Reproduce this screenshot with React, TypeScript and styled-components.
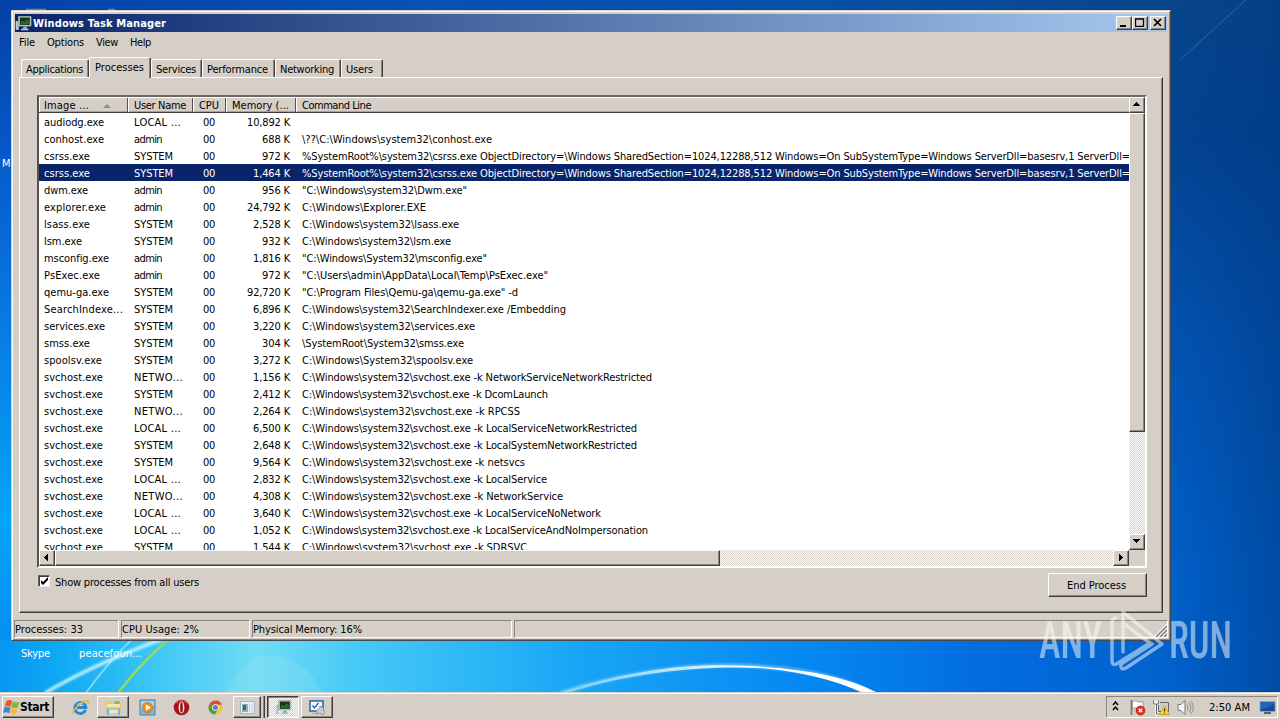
import { useLayoutEffect, useRef, useState } from "react";
import type { ReactNode } from "react";
import styled, { createGlobalStyle, css } from "styled-components";

type Process = {
    name: [string, number];
    user: [string, number];
    memory: string;
    command?: [string, number];
    selected?: boolean;
};

const CSRSS = '%SystemRoot%\\system32\\csrss.exe ObjectDirectory=\\Windows SharedSection=1024,12288,512 Windows=On SubSystemType=Windows ServerDll=basesrv,1 ServerDll=';
const SVCHOST = 'C:\\Windows\\system32\\svchost.exe -k ';

const SYSTEM: [string, number] = ['SYSTEM', 39];
const ADMIN: [string, number] = ['admin', 28];
const LOCAL: [string, number] = ['LOCAL ...', 47];
const NETWORK: [string, number] = ['NETWO...', 49];
const SVC: [string, number] = ['svchost.exe', 59];

const processes: Process[] = [
    { name: ['audiodg.exe', 60], user: LOCAL, memory: '10,892 K' },
    { name: ['conhost.exe', 60], user: ADMIN, memory: '688 K', command: ['\\??\\C:\\Windows\\system32\\conhost.exe', 190] },
    { name: ['csrss.exe', 46], user: SYSTEM, memory: '972 K', command: [CSRSS, 828] },
    { name: ['csrss.exe', 46], user: SYSTEM, memory: '1,464 K', command: [CSRSS, 828], selected: true },
    { name: ['dwm.exe', 44], user: ADMIN, memory: '956 K', command: ['"C:\\Windows\\system32\\Dwm.exe"', 165] },
    { name: ['explorer.exe', 62], user: ADMIN, memory: '24,792 K', command: ['C:\\Windows\\Explorer.EXE', 124] },
    { name: ['lsass.exe', 46], user: SYSTEM, memory: '2,528 K', command: ['C:\\Windows\\system32\\lsass.exe', 157] },
    { name: ['lsm.exe', 38], user: SYSTEM, memory: '932 K', command: ['C:\\Windows\\system32\\lsm.exe', 149] },
    { name: ['msconfig.exe', 65], user: ADMIN, memory: '1,816 K', command: ['"C:\\Windows\\System32\\msconfig.exe"', 185] },
    { name: ['PsExec.exe', 56], user: ADMIN, memory: '972 K', command: ['"C:\\Users\\admin\\AppData\\Local\\Temp\\PsExec.exe"', 246] },
    { name: ['qemu-ga.exe', 65], user: SYSTEM, memory: '92,720 K', command: ['"C:\\Program Files\\Qemu-ga\\qemu-ga.exe" -d', 216] },
    { name: ['SearchIndexe...', 79], user: SYSTEM, memory: '6,896 K', command: ['C:\\Windows\\system32\\SearchIndexer.exe /Embedding', 264] },
    { name: ['services.exe', 61], user: SYSTEM, memory: '3,220 K', command: ['C:\\Windows\\system32\\services.exe', 173] },
    { name: ['smss.exe', 46], user: SYSTEM, memory: '304 K', command: ['\\SystemRoot\\System32\\smss.exe', 162] },
    { name: ['spoolsv.exe', 58], user: SYSTEM, memory: '3,272 K', command: ['C:\\Windows\\System32\\spoolsv.exe', 171] },
    { name: SVC, user: NETWORK, memory: '1,156 K', command: [SVCHOST + 'NetworkServiceNetworkRestricted', 350] },
    { name: SVC, user: SYSTEM, memory: '2,412 K', command: [SVCHOST + 'DcomLaunch', 246] },
    { name: SVC, user: NETWORK, memory: '2,264 K', command: [SVCHOST + 'RPCSS', 218] },
    { name: SVC, user: LOCAL, memory: '6,500 K', command: [SVCHOST + 'LocalServiceNetworkRestricted', 335] },
    { name: SVC, user: SYSTEM, memory: '2,648 K', command: [SVCHOST + 'LocalSystemNetworkRestricted', 335] },
    { name: SVC, user: SYSTEM, memory: '9,564 K', command: [SVCHOST + 'netsvcs', 223] },
    { name: SVC, user: LOCAL, memory: '2,832 K', command: [SVCHOST + 'LocalService', 245] },
    { name: SVC, user: NETWORK, memory: '4,308 K', command: [SVCHOST + 'NetworkService', 261] },
    { name: SVC, user: LOCAL, memory: '3,640 K', command: [SVCHOST + 'LocalServiceNoNetwork', 299] },
    { name: SVC, user: LOCAL, memory: '1,052 K', command: [SVCHOST + 'LocalServiceAndNoImpersonation', 346] },
    { name: SVC, user: SYSTEM, memory: '1,544 K', command: [SVCHOST + 'SDRSVC', 225] },
];

const memoryWidth = (text: string) => (text.length === 8 ? 43 : text.length === 7 ? 37 : 28);

// Spreads the letters so that the text takes up the given width
const Fit = ({ text, width }: { text: string; width: number }) => {
    const ref = useRef<HTMLSpanElement>(null);
    const [spacing, setSpacing] = useState(0);

    useLayoutEffect(() => {
        const natural = ref.current!.getBoundingClientRect().width - spacing * text.length;
        setSpacing((width - natural) / text.length);
    }, [text, width]);

    return <FitText ref={ ref } style={ { letterSpacing: spacing } }>{ text }</FitText>;
};

const WindowsFlag = () => (
    <svg width="17" height="17" viewBox="0 0 17 17">
        <path d="M3.400 2Q7 .2 9.300 2L7.700 7.800Q5 6.200 1.700 7.800Z" fill="#e8582a" />
        <path d="M9.900 2.500Q13 4.200 16.500 2.700L14.800 8.500Q11.500 9.800 8.300 8.200Z" fill="#7fb83a" />
        <path d="M1.400 8.600Q4.800 7 7.400 8.700L6 14.200Q3 12.600 0 14Z" fill="#3d86d6" />
        <path d="M8 9.100Q11.200 10.800 14.600 9.300L13 14.900Q9.800 16.400 6.500 14.600Z" fill="#f5bd30" />
    </svg>
);

const TaskManagerIcon = ({ size = 17 }: { size?: number }) => (
    <svg width={ size } height={ size } viewBox="0 0 17 17">
        <path d="M1 6v9h2.500V6z" fill="#9aa0a0" />
        <path d="M1.200 6v8M3 7v8" stroke="#e8ecec" strokeWidth=".8" />
        <path d="M3.500 1.500h12.500v9.500H3.500z" fill="#c8d0c8" stroke="#a4aca4" strokeWidth=".8" />
        <path d="M4.800 2.500h10v7.500h-10z" fill="#12351b" />
        <path d="M5.500 7.500l2-2 2 1.500 2-3 3 3v2.500h-9z" fill="#28642e" />
        <path d="M8.500 11.500h3l1 3h-5z" fill="#9ba6b0" />
        <path d="M6 14.500h7.500" stroke="#b8c3ca" strokeWidth="1.500" />
    </svg>
);

const IeIcon = () => (
    <svg width="17" height="17" viewBox="0 0 17 17">
        <path d="M13.500 11A5.500 5.500 0 1 1 13.800 8.500H5" fill="none" stroke="#2b85cf" strokeWidth="2.900" />
        <path d="M1.600 15.200C-.5 11.500 10 1.500 15.500 1.800c1 .3.8 1.700.2 3" fill="none" stroke="#e9b829" strokeWidth="1.500" />
        <path d="M5 5.500Q8 3 11.500 5" fill="none" stroke="#8ed0f5" />
    </svg>
);

const FolderIcon = () => (
    <svg width="17" height="17" viewBox="0 0 17 17">
        <path d="M1 2.500h6l1 1.500h8v11H1z" fill="#e9ca67" />
        <path d="M2 5h13v9H2z" fill="#f8e8a5" />
        <path d="M9.500 2h5v3h-5z" fill="#88b775" />
        <path d="M3 16V9.500h11V16" fill="none" stroke="#6fb9e6" strokeWidth="2.200" />
        <path d="M3 9h11" stroke="#b4e0f5" />
    </svg>
);

const PlayerIcon = () => (
    <svg width="17" height="17" viewBox="0 0 17 17">
        <path d="M1 1h15v15H1z" fill="#78b9e5" stroke="#4681ad" />
        <path d="M2 2h13v5Q8 6 2 11z" fill="#afdaef" />
        <circle cx="8.500" cy="8.500" r="5.300" fill="#f28b1c" stroke="#d06a13" strokeWidth=".7" />
        <path d="M6.800 5.300v6.400l5-3.200z" fill="#fff" />
    </svg>
);

const OperaIcon = () => (
    <svg width="17" height="17" viewBox="0 0 17 17">
        <circle cx="8.500" cy="8.500" r="7.800" fill="#a9141b" />
        <path d="M3 4Q8-.5 14 4" fill="none" stroke="#da6260" />
        <ellipse cx="8.500" cy="8.500" rx="2.900" ry="6" fill="#f2dfdc" />
        <ellipse cx="8.500" cy="8.500" rx="1.300" ry="5.200" fill="#8d1015" />
    </svg>
);

const ChromeIcon = () => (
    <svg width="15" height="15" viewBox="0 0 16 16">
        <circle cx="8" cy="8" r="7.500" fill="#f6c632" />
        <path d="M8 8L1.500 4.200A7.500 7.500 0 0 0 7.500 15.500L11 9z" fill="#4d9c53" />
        <path d="M8 8L1.500 4.200A7.500 7.500 0 0 1 14.900 5H8z" fill="#d94c3d" />
        <circle cx="8" cy="8" r="3.500" fill="#fff" />
        <circle cx="8" cy="8" r="2.700" fill="#4783d6" />
    </svg>
);

const ConsoleIcon = () => (
    <svg width="15" height="13" viewBox="0 0 15 13">
        <path d="M.5.5h14v12H.5z" fill="#e9f0f2" stroke="#a5b5bc" />
        <path d="M2 3h6v8H2z" fill="#8fb0b8" />
        <path d="M3 4h3v5H3z" fill="#3c6472" />
        <path d="M9.500 3v8M12 3v8" stroke="#c6d2d8" />
    </svg>
);

const ConfigIcon = () => (
    <svg width="18" height="17" viewBox="0 0 18 17">
        <path d="M2 2h13v10H2z" fill="#f4f8ff" stroke="#2f5f9e" strokeWidth="1.500" />
        <path d="M4.500 6.500L6.500 9l4-5" fill="none" stroke="#315fb5" strokeWidth="1.400" />
        <path d="M10.500 7.500h3M4 14.500h6" stroke="#8caed8" />
        <path d="M13 7l3 3-1 1 2 2-2 3-3-2-3 1-1-3 3-2z" fill="#c4ced6" stroke="#7d8892" strokeWidth=".8" />
    </svg>
);

const FlagIcon = () => (
    <svg width="17" height="17" viewBox="0 0 17 17">
        <path d="M2.500 1v15" stroke="#777" strokeWidth="1.700" />
        <path d="M3.500 2.500Q6 1 8.500 2.500T14 2.500v7Q11.500 11 8.500 9.500t-5 0z" fill="#fff" stroke="#8b8b8b" strokeWidth=".8" />
        <circle cx="11.500" cy="11.500" r="4.500" fill="#d82b25" stroke="#a61715" strokeWidth=".6" />
        <path d="M9.700 9.700l3.600 3.600m0-3.600l-3.600 3.600" stroke="#fff" strokeWidth="1.400" />
    </svg>
);

const NetworkIcon = () => (
    <svg width="17" height="17" viewBox="0 0 17 17">
        <path d="M5.500 3.500h10v9h-10z" fill="#c9cfd0" stroke="#666" />
        <path d="M1.500 1v3.500h4V1M3.500 4.500V15H8" fill="none" stroke="#fff" strokeWidth="2.500" />
        <path d="M.7 1v4h5V1M3.500 5v10H9" fill="none" stroke="#555" strokeWidth=".9" />
        <path d="M11.500 6.500L16.500 15.500H6.500z" fill="#ffd82d" stroke="#c39618" strokeWidth=".7" />
        <path d="M11.500 9.500v3m0 1.200v1" stroke="#333" strokeWidth="1.300" />
    </svg>
);

const SpeakerIcon = () => (
    <svg width="17" height="17" viewBox="0 0 17 17">
        <path d="M1 5.500h3l4-4v14l-4-4H1z" fill="#f6f6f6" stroke="#777" />
        <path d="M10 5.500q2 3 0 6M12 3.500q3.500 5 0 10M14 2q4.500 6.500 0 13" fill="none" stroke="#8c8c8c" />
    </svg>
);

const MonitorIcon = () => (
    <svg width="17" height="15" viewBox="0 0 17 15">
        <path d="M1 1.500h15v10H1z" fill="#2265b0" stroke="#8ba6c0" strokeWidth=".8" />
        <path d="M1.500 9Q9 9 15.500 3v8h-14z" fill="#194c96" />
        <path d="M5 13h7" stroke="#303c51" strokeWidth="1.500" />
    </svg>
);

const Arrow = ({ dir }: { dir: 'up' | 'down' | 'left' | 'right' }) => {
    const paths = {
        up: 'M4 2h1v1h1v1h1v1h1v1H1V5h1V4h1V3h1z',
        down: 'M1 2h7v1H7v1H6v1H5v1H4V5H3V4H2V3H1z',
        left: 'M6 1v7H5V7H4V6H3V5H2V4h1V3h1V2h1V1z',
        right: 'M3 1h1v1h1v1h1v1h1v1H6v1H5v1H4v1H3z',
    };
    return <ArrowSvg width="9" height="9" viewBox="0 0 9 9"><path d={ paths[dir] } /></ArrowSvg>;
};

const Wallpaper = () => (
    <WallpaperSvg viewBox="0 0 1280 692" preserveAspectRatio="none">
        <defs>
            <linearGradient id="left" x1="0" y1="0" x2="0" y2="1">
                <stop offset="0" stopColor="#0440a5" />
                <stop offset=".22" stopColor="#0759c8" />
                <stop offset=".5" stopColor="#087fe4" />
                <stop offset=".75" stopColor="#05a4f5" />
                <stop offset="1" stopColor="#0587ee" />
            </linearGradient>
            <linearGradient id="right" x1="0" y1="0" x2="0" y2="1">
                <stop offset="0" stopColor="#08458a" />
                <stop offset=".2" stopColor="#024391" />
                <stop offset=".5" stopColor="#0254b4" />
                <stop offset=".8" stopColor="#0060ca" />
                <stop offset="1" stopColor="#0064d0" />
            </linearGradient>
            <linearGradient id="shade" x1="0" y1="0" x2="1" y2="0">
                <stop offset="0" stopColor="#003a82" stopOpacity="0" />
                <stop offset="1" stopColor="#003a82" stopOpacity=".55" />
            </linearGradient>
            <linearGradient id="top" x1="0" y1="0" x2="1" y2="0">
                <stop offset="0" stopColor="#0442a8" />
                <stop offset=".35" stopColor="#0650b8" />
                <stop offset=".7" stopColor="#0650a8" />
                <stop offset="1" stopColor="#08458a" />
            </linearGradient>
            <linearGradient id="bottom" x1="0" y1="0" x2="1" y2="0">
                <stop offset="0" stopColor="#0596f2" />
                <stop offset=".05" stopColor="#10aaf5" />
                <stop offset=".13" stopColor="#42caf4" />
                <stop offset=".2" stopColor="#72dcf4" />
                <stop offset=".28" stopColor="#45c9f7" />
                <stop offset=".45" stopColor="#19a6f5" />
                <stop offset=".63" stopColor="#0588f2" />
                <stop offset=".77" stopColor="#026cdf" />
                <stop offset=".91" stopColor="#0062cd" />
                <stop offset="1" stopColor="#0062cd" />
            </linearGradient>
            <linearGradient id="arc" x1="0" y1="0" x2="1" y2="0">
                <stop offset="0" stopColor="#9de1ff" stopOpacity=".5" />
                <stop offset=".6" stopColor="#fff" />
                <stop offset="1" stopColor="#fff" />
            </linearGradient>
            <filter id="soft"><feGaussianBlur stdDeviation="1.200" /></filter>
        </defs>
        <rect width="640" height="692" fill="url(#left)" />
        <rect x="640" width="640" height="692" fill="url(#right)" />
        <rect width="1165" height="14" fill="url(#top)" />
        <rect y="640" width="1280" height="52" fill="url(#bottom)" />
        <rect x="1165" width="115" height="692" fill="url(#shade)" />
        <path d="M1180 60L1250-4" stroke="#6ea5d0" strokeWidth="1.500" opacity=".22" />
        <path d="M26 9.500h20M108 9.500h7" stroke="#b9a06f" strokeWidth="1.500" opacity=".7" />
        <path d="M226 692Q245 655 272 655Q308 660 322 692z" fill="#b5eef5" opacity=".16" />
        <path d="M45 693Q92 665 165 638" stroke="#d9fbff" strokeWidth="3.500" fill="none" opacity=".8" filter="url(#soft)" />
        <path d="M86 693Q98 676 112 660T135 638" stroke="#b5f0ff" strokeWidth="2" fill="none" opacity=".6" />
        <path d="M118 693Q138 666 170 638" stroke="#92dc58" strokeWidth="2.500" fill="none" />
        <path d="M560 693C640 667 720 662 766 667C815 671 850 680 870 693" stroke="#fff" strokeWidth="4" fill="none" opacity=".35" filter="url(#soft)" />
        <path d="M562 692C640 667 700 663 750 666Q835 670 878 693L863 693Q822 674 766 668.500C720 665 640 669 567 693z" fill="url(#arc)" />
    </WallpaperSvg>
);

const Watermark = () => (
    <WatermarkSvg viewBox="0 0 200 70">
        <g fill="#fff" fontFamily="Roboto, sans-serif" fontSize="51" fontWeight="500">
            <text x="3" y="53" textLength="63" lengthAdjust="spacingAndGlyphs">ANY</text>
            <text x="133" y="53" textLength="63" lengthAdjust="spacingAndGlyphs">RUN</text>
        </g>
        <g fill="none" stroke="#fff" strokeWidth="3.500" strokeLinejoin="round" strokeLinecap="round">
            <path d="M80 13Q76 13 76 18V55Q76 62 82 58L114 38L88 19" />
            <path d="M87 47V7L126 39L90 63Q84 66 85 59L116 39" />
        </g>
    </WatermarkSvg>
);

const Tabs = () => {
    const tabs: [string, number, number, boolean?][] = [
        ['Applications', 68, 57], ['Processes', 62, 49, true], ['Services', 51, 40],
        ['Performance', 73, 61], ['Networking', 66, 54], ['Users', 42, 27],
    ];
    return (
        <TabStrip>
            { tabs.map(([label, width, text, active]) => (
                <Tab key={ label } $width={ width } $active={ active }><Fit text={ label } width={ text } /></Tab>
            )) }
        </TabStrip>
    );
};

const HeaderCell = ({ label, width, children }: { label: string; width: number; children?: ReactNode }) => (
    <HeadCell><Fit text={ label } width={ width } />{ children }</HeadCell>
);

const ProcessList = () => (
    <ListBox>
        <ListMain>
            <Header>
                <HeaderCell label="Image ..." width={ 45 }><SortMark /></HeaderCell>
                <HeaderCell label="User Name" width={ 52 } />
                <HeaderCell label="CPU" width={ 20 } />
                <HeaderCell label="Memory (..." width={ 57 } />
                <HeaderCell label="Command Line" width={ 69 } />
            </Header>
            <Rows>
                { processes.map((process, index) => (
                    <Row key={ index } $selected={ process.selected }>
                        <Cell><Fit text={ process.name[0] } width={ process.name[1] } /></Cell>
                        <Cell $indent={ 6 }><Fit text={ process.user[0] } width={ process.user[1] } /></Cell>
                        <Cell $align="center"><Fit text="00" width={ 12 } /></Cell>
                        <Cell $align="flex-end"><Fit text={ process.memory } width={ memoryWidth(process.memory) } /></Cell>
                        <Cell $indent={ 6 }>{ process.command && <Fit text={ process.command[0] } width={ process.command[1] } /> }</Cell>
                    </Row>
                )) }
            </Rows>
        </ListMain>
        <VerticalBar>
            <ScrollButton><Arrow dir="up" /></ScrollButton>
            <Thumb $height={ 319 } />
            <Track />
            <ScrollButton><Arrow dir="down" /></ScrollButton>
        </VerticalBar>
        <HorizontalBar>
            <ScrollButton><Arrow dir="left" /></ScrollButton>
            <Thumb $width={ 665 } />
            <Track />
            <ScrollButton><Arrow dir="right" /></ScrollButton>
        </HorizontalBar>
    </ListBox>
);

const TaskManager = () => (
    <Window>
        <TitleBar>
            <TaskManagerIcon />
            <Title><Fit text="Windows Task Manager" width={ 133 } /></Title>
            <Caption>
                <CaptionButton><svg width="10" height="9"><path d="M1 7h6v2H1z" /></svg></CaptionButton>
                <CaptionButton><svg width="10" height="9"><path d="M.5 1h8v7.500h-8zM0 1h9" fill="none" stroke="#000" strokeWidth="1.300" /></svg></CaptionButton>
                <CaptionButton $gap><svg width="10" height="9"><path d="M1 1l7 7M8 1L1 8" stroke="#000" strokeWidth="1.700" /></svg></CaptionButton>
            </Caption>
        </TitleBar>
        <MenuBar>
            <Fit text="File" width={ 16 } />
            <Fit text="Options" width={ 37 } />
            <Fit text="View" width={ 22 } />
            <Fit text="Help" width={ 21 } />
        </MenuBar>
        <Tabs />
        <TabPage>
            <ProcessList />
            <Actions>
                <CheckLabel>
                    <CheckBox><svg width="9" height="9"><path d="M1 3v3l2 2 5-5V0L3 5z" /></svg></CheckBox>
                    <Fit text="Show processes from all users" width={ 144 } />
                </CheckLabel>
                <EndButton><Fit text="End Process" width={ 59 } /></EndButton>
            </Actions>
        </TabPage>
        <StatusBar>
            <StatusPanel><Fit text="Processes: 33" width={ 68 } /></StatusPanel>
            <StatusPanel><Fit text="CPU Usage: 2%" width={ 77 } /></StatusPanel>
            <StatusPanel><Fit text="Physical Memory: 16%" width={ 109 } /></StatusPanel>
            <StatusPanel>
                <Grip viewBox="0 0 13 13">
                    <path d="M0 13L13 0M4 13L13 4M8 13L13 8" stroke="#fff" />
                    <path d="M2 13L13 2M6 13L13 6M10 13L13 10" stroke="#858078" strokeWidth="1.400" />
                </Grip>
            </StatusPanel>
        </StatusBar>
    </Window>
);

const App = () => (
    <>
        <GlobalStyle />
        <Screen>
            <Desktop>
                <Wallpaper />
                <IconLabel $x={ 2 } $y={ 157 }>M</IconLabel>
                <IconLabel $x={ 21 } $y={ 647 }><Fit text="Skype" width={ 29 } /></IconLabel>
                <IconLabel $x={ 79 } $y={ 647 }><Fit text="peacefoun..." width={ 63 } /></IconLabel>
                <TaskManager />
                <Watermark />
            </Desktop>
            <Taskbar>
                <StartButton><WindowsFlag /><Fit text="Start" width={ 29 } /></StartButton>
                <QuickLaunch>
                    <TaskItem $width={ 33 }><IeIcon /></TaskItem>
                    <TaskItem $width={ 32 } $raised><FolderIcon /></TaskItem>
                    <TaskItem $width={ 36 }><PlayerIcon /></TaskItem>
                    <TaskItem $width={ 32 }><OperaIcon /></TaskItem>
                    <TaskItem $width={ 36 }><ChromeIcon /></TaskItem>
                    <TaskItem $width={ 28 } $raised><ConsoleIcon /></TaskItem>
                    <StackEdge />
                    <TaskItem $width={ 32 } $pressed><TaskManagerIcon size={ 17 } /></TaskItem>
                    <TaskItem $width={ 32 } $raised $gap><ConfigIcon /></TaskItem>
                </QuickLaunch>
                <Tray>
                    <Chevrons width="7" height="10"><path d="M1 4l2.500-3L6 4M1 9l2.500-3L6 9" fill="none" stroke="#000" strokeWidth="1.400" /></Chevrons>
                    <FlagIcon />
                    <NetworkIcon />
                    <SpeakerIcon />
                    <Clock><Fit text="2:50 AM" width={ 41 } /></Clock>
                    <MonitorIcon />
                </Tray>
            </Taskbar>
        </Screen>
    </>
);

export default App;

const face = '#d6cfc8';

const raised = css`
    background: ${ face };
    border: 1px solid;
    border-color: #fff #403d3a #403d3a #fff;
    box-shadow: inset -1px -1px #8a857f;
`;

const checker = css`
    background: repeating-conic-gradient(#fff 0 25%, ${ face } 0 50%) 0 0 / 2px 2px;
`;

const GlobalStyle = createGlobalStyle`
    * {
        box-sizing: border-box;
    }

    body {
        margin: 0;
        overflow: hidden;
        font: 11px/13px "DejaVu Sans Condensed", "DejaVu Sans", sans-serif;
        font-stretch: condensed;
        color: #000;
    }

    svg {
        display: block;
        flex: none;
    }
`;

const FitText = styled.span`
    display: inline-block;
    white-space: pre;
    flex: none;
`;

const Screen = styled.div`
    display: flex;
    flex-direction: column;
    width: 1280px;
    height: 720px;
    overflow: hidden;
`;

const Desktop = styled.div`
    position: relative;
    height: 692px;
    overflow: hidden;
`;

const WallpaperSvg = styled.svg`
    width: 1280px;
    height: 692px;
`;

const IconLabel = styled.div<{ $x: number; $y: number }>`
    position: absolute;
    left: ${ ({ $x }) => $x }px;
    top: ${ ({ $y }) => $y }px;
    color: #fff;
`;

const WatermarkSvg = styled.svg`
    position: absolute;
    left: 1036px;
    top: 605px;
    width: 200px;
    height: 70px;
    opacity: 0.5;
`;

const Window = styled.div`
    position: absolute;
    left: 11px;
    top: 10px;
    width: 1160px;
    height: 631px;
    display: flex;
    flex-direction: column;
    padding: 3px 2px 2px;
    background: ${ face };
    border: 1px solid;
    border-color: #d4d0c8 #45484c #45484c #d4d0c8;
    box-shadow: inset 1px 1px #fff, inset -1px -1px #8a857f;
`;

const TitleBar = styled.div`
    display: flex;
    align-items: center;
    height: 18px;
    margin: 0 1px;
    padding-right: 1px;
    background: linear-gradient(90deg, #0a246a, #a6caf0);
`;

const Title = styled.div`
    margin-left: 1px;
    color: #fff;
    font-weight: bold;
`;

const Caption = styled.div`
    display: flex;
    margin-left: auto;
`;

const CaptionButton = styled.div<{ $gap?: boolean }>`
    ${ raised }
    display: flex;
    justify-content: center;
    width: 16px;
    height: 14px;
    margin-left: ${ ({ $gap }) => ($gap ? 2 : 0) }px;
    padding-top: 1px;
`;

const MenuBar = styled.div`
    display: flex;
    gap: 12px;
    height: 25px;
    padding: 4px 0 0 5px;
`;

const TabStrip = styled.div`
    display: flex;
    align-items: flex-end;
    height: 20px;
    padding-left: 7px;
`;

const Tab = styled.div<{ $width: number; $active?: boolean }>`
    display: flex;
    width: ${ ({ $width }) => $width }px;
    height: ${ ({ $active }) => ($active ? 21 : 18) }px;
    margin-bottom: ${ ({ $active }) => ($active ? -1 : 0) }px;
    padding: 3px 0 0 ${ ({ $active }) => ($active ? 5 : 4) }px;
    background: ${ face };
    border: 1px solid;
    border-color: #fff #403d3a transparent #fff;
    border-bottom: 0;
    border-radius: 2px 2px 0 0;
    box-shadow: inset -1px 0 #8a857f;
    z-index: ${ ({ $active }) => ($active ? 1 : 0) };
`;

const TabPage = styled.div`
    height: 536px;
    margin: 0 5px;
    padding: 17px 15px 0 18px;
    border: 1px solid;
    border-color: #fff #403d3a #403d3a #fff;
    box-shadow: inset -1px -1px #8a857f;
`;

const ListBox = styled.div`
    display: grid;
    grid-template: 453px 16px / 1fr 16px;
    height: 473px;
    margin-left: -1px;
    background: ${ face };
    border: 2px solid;
    border-color: #6b6763 #fff #fff #55514e;
`;

const ListMain = styled.div`
    overflow: hidden;
    background: #fff;
`;

const Header = styled.div`
    display: grid;
    grid-template-columns: 89px 65px 33px 70px 1fr;
    height: 16px;
    background: ${ face };
    border-bottom: 1px solid #403d3a;
`;

const HeadCell = styled.div`
    display: flex;
    align-items: center;
    gap: 14px;
    padding: 1px 0 0 5px;
    border-top: 1px solid #fff;
    border-left: 1px solid #fff;
    box-shadow: inset -1px 0 #55514e, inset 0 -1px #a8a29c;

    &:first-child {
        padding-left: 4px;
    }

    &:last-child {
        box-shadow: inset 0 -1px #a8a29c;
    }
`;

const SortMark = styled.i`
    border: 4px solid transparent;
    border-top: 0;
    border-bottom-color: #918c86;
`;

const Rows = styled.div`
    height: 437px;
    overflow: hidden;
`;

const Row = styled.div<{ $selected?: boolean }>`
    display: grid;
    grid-template-columns: 89px 65px 33px 70px 1fr;
    height: 17px;
    line-height: 17px;
    padding-top: 1px;
    color: ${ ({ $selected }) => ($selected ? '#fff' : '#000') };
    background: ${ ({ $selected }) => ($selected ? '#0a246a' : '#fff') };
`;

const Cell = styled.div<{ $align?: string; $indent?: number }>`
    display: flex;
    justify-content: ${ ({ $align = 'flex-start' }) => $align };
    height: 16px;
    padding: 0 6px 0 ${ ({ $indent = 5 }) => $indent }px;

    &:last-child {
        padding-right: 0;
    }
`;

const VerticalBar = styled.div`
    display: flex;
    flex-direction: column;
`;

const HorizontalBar = styled.div`
    display: flex;
`;

const ScrollButton = styled.div`
    ${ raised }
    display: flex;
    align-items: center;
    justify-content: center;
    flex: none;
    width: 16px;
    height: 16px;
`;

const ArrowSvg = styled.svg`
    margin: 0 1px 1px 0;
`;

const Thumb = styled.div<{ $width?: number; $height?: number }>`
    ${ raised }
    flex: none;
    width: ${ ({ $width = 16 }) => $width }px;
    height: ${ ({ $height = 16 }) => $height }px;
`;

const Track = styled.div`
    ${ checker }
    flex: 1;
`;

const Actions = styled.div`
    display: flex;
    justify-content: space-between;
    padding-top: 5px;
`;

const CheckLabel = styled.div`
    display: flex;
    gap: 5px;
    margin-top: 3px;
`;

const CheckBox = styled.div`
    display: flex;
    align-items: center;
    justify-content: center;
    width: 12px;
    height: 12px;
    margin-top: -1px;
    background: #fff;
    border: 1px solid;
    border-color: #6b6763 #f0ece8 #f0ece8 #6b6763;
    box-shadow: inset 1px 1px #403d3a;
`;

const EndButton = styled.div`
    ${ raised }
    display: flex;
    align-items: center;
    padding-left: 18px;
    width: 99px;
    height: 24px;
`;

const StatusBar = styled.div`
    display: grid;
    grid-template-columns: 105px 129px 260px 1fr;
    gap: 2px;
    height: 18px;
    margin-top: 7px;
`;

const StatusPanel = styled.div`
    display: flex;
    padding-top: 2px;
    border: 1px solid;
    border-color: #8a857f #fff #fff #8a857f;
`;

const Grip = styled.svg`
    width: 13px;
    height: 13px;
    margin: 1px 0 0 auto;
`;

const Taskbar = styled.div`
    display: flex;
    height: 28px;
    padding: 3px 2px 0;
    background: ${ face };
    border-top: 1px solid ${ face };
    box-shadow: inset 0 1px #fff;
`;

const StartButton = styled.div`
    ${ raised }
    display: flex;
    align-items: center;
    width: 52px;
    height: 22px;
    padding-left: 0;
    font-size: 12px;
    font-weight: bold;
`;

const QuickLaunch = styled.div`
    display: flex;
    margin-left: 10px;
`;

const TaskItem = styled.div<{ $width: number; $raised?: boolean; $pressed?: boolean; $gap?: boolean }>`
    display: flex;
    align-items: center;
    justify-content: center;
    width: ${ ({ $width }) => $width }px;
    height: 22px;
    margin-left: ${ ({ $gap }) => ($gap ? 2 : 0) }px;
    ${ ({ $raised }) => $raised && raised }
    ${ ({ $pressed }) => $pressed && css`
        ${ checker }
        border: 1px solid;
        border-color: #403d3a #fff #fff #403d3a;
        box-shadow: inset 1px 1px #8a857f;
    ` }
`;

const StackEdge = styled.div`
    width: 4px;
    height: 22px;
    margin-right: 2px;
    border-right: 1px solid #403d3a;
    box-shadow: inset -1px 0 #8a857f;
`;

const Tray = styled.div`
    display: flex;
    align-items: center;
    gap: 7px;
    width: 172px;
    height: 22px;
    margin-left: auto;
    padding-left: 5px;
    border: 1px solid;
    border-color: #8a857f #fff #fff #8a857f;
`;

const Chevrons = styled.svg`
    margin: 0 3px 3px 0;
`;

const Clock = styled.div`
    margin: 0 2px 0 8px;
`;
